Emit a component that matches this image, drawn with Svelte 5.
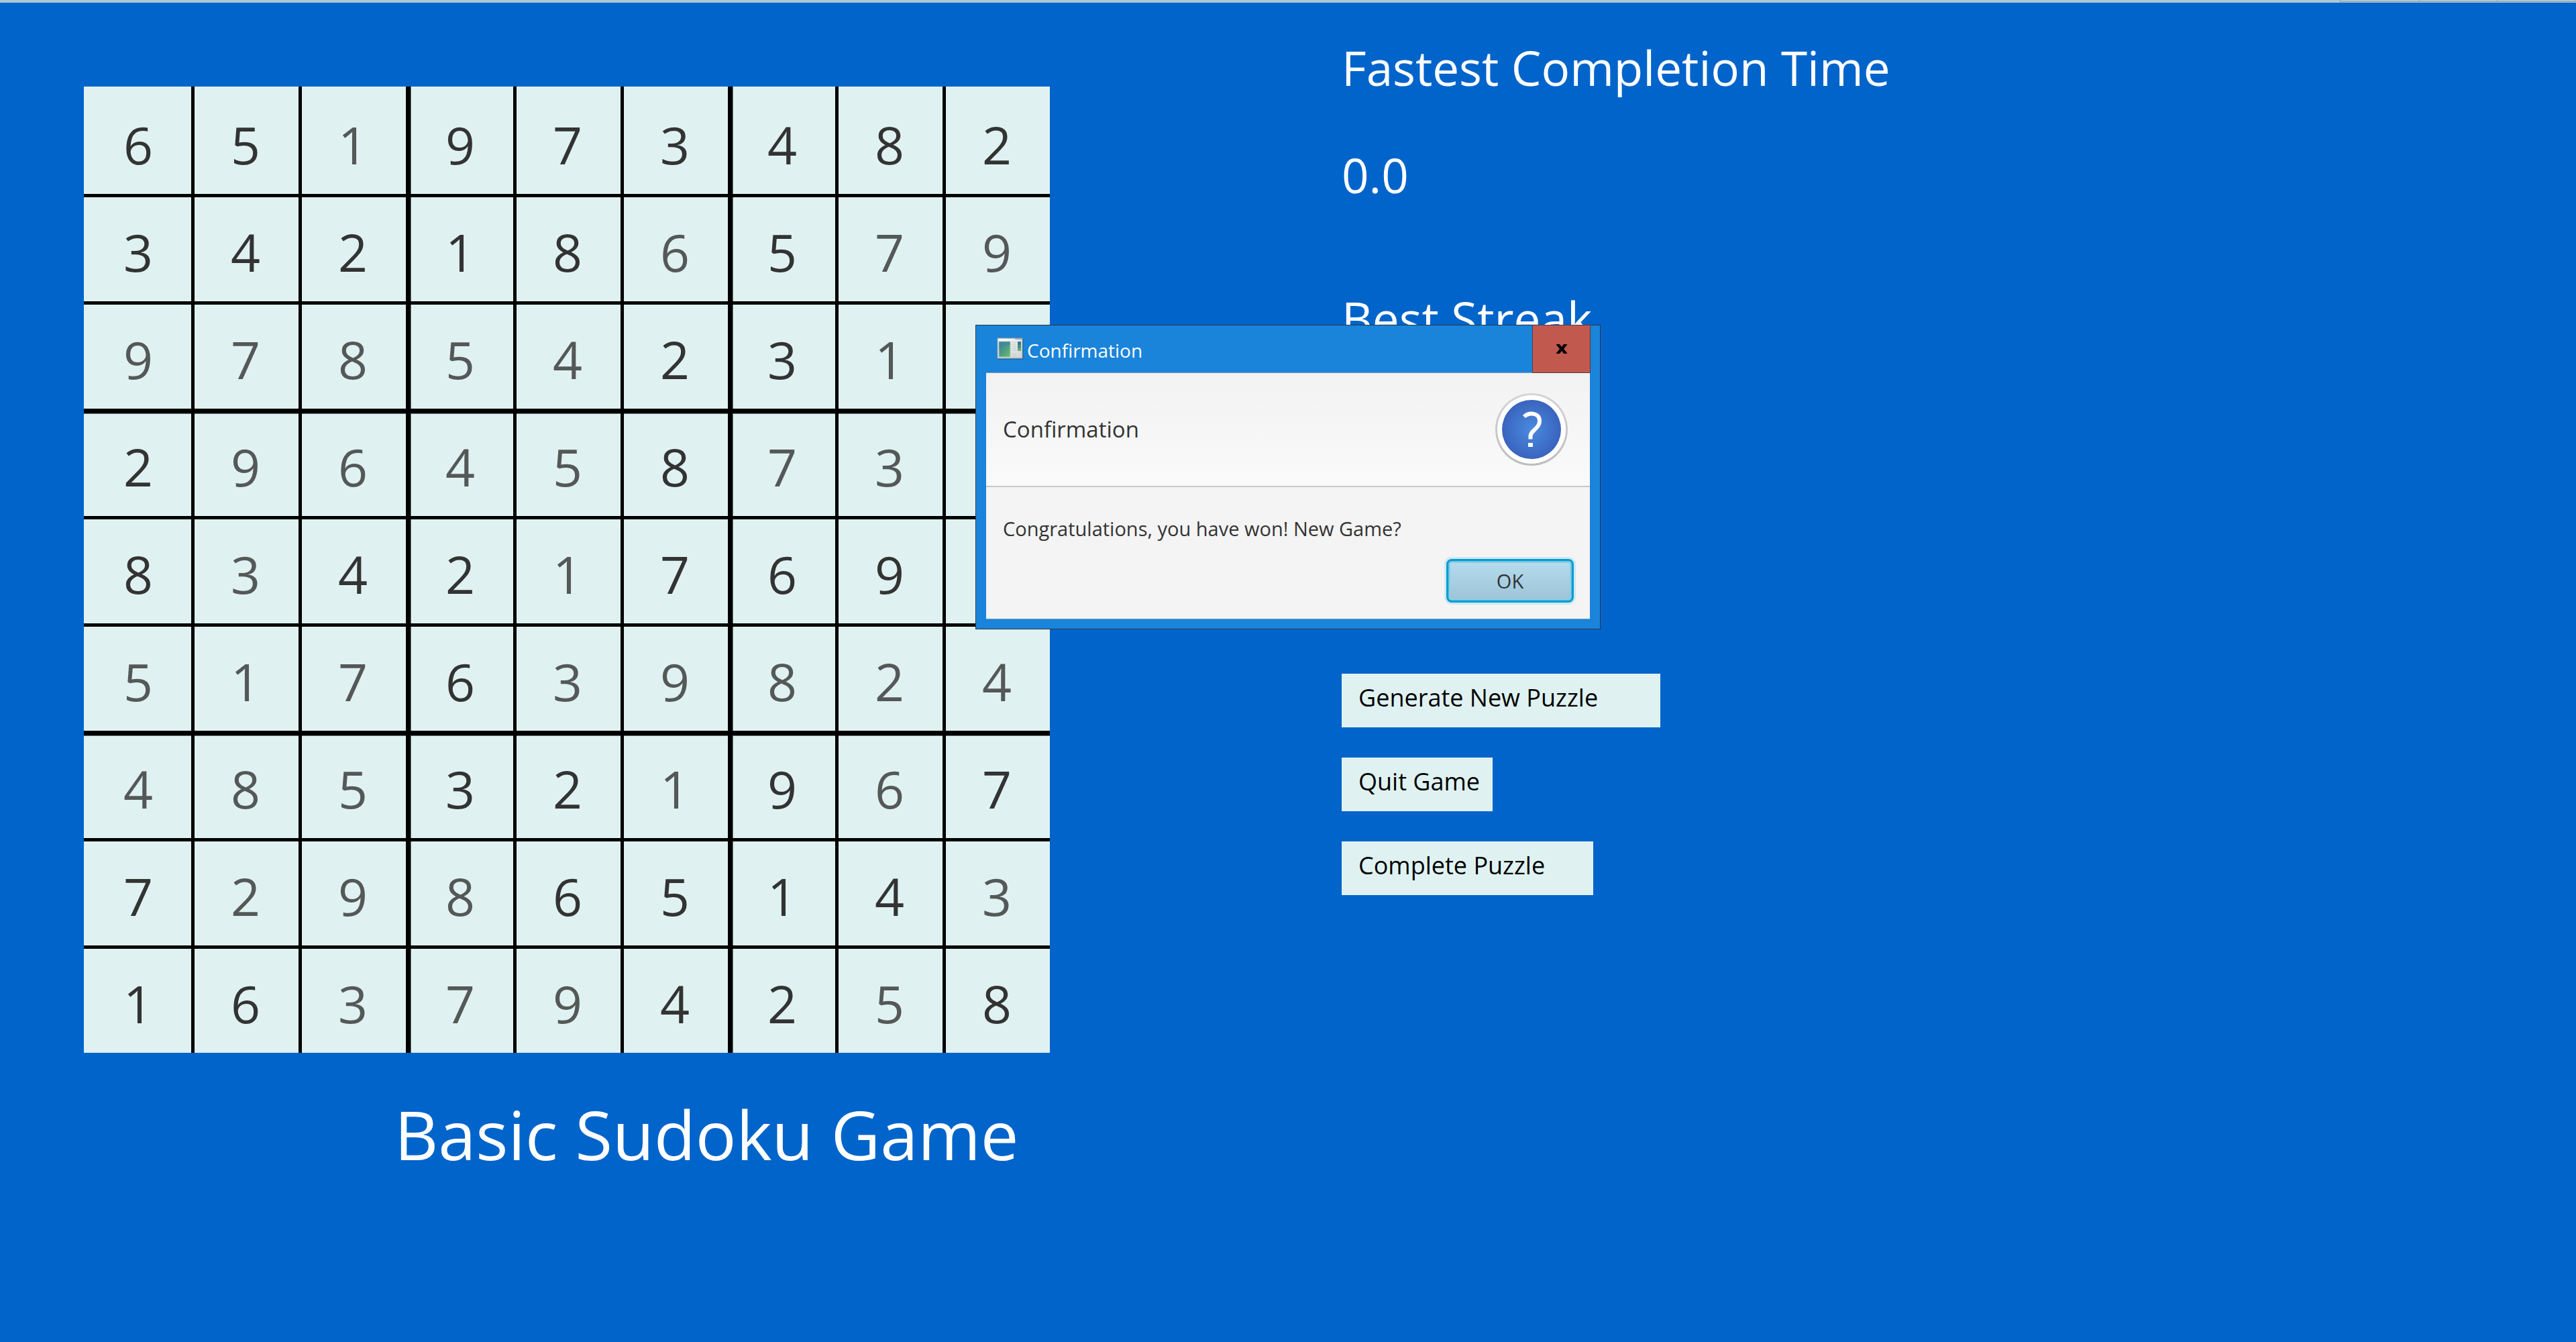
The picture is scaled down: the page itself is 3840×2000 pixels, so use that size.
<script>
  // A trailing * marks a number filled in by the player.
  const rows = [
    '6 5 1* 9 7 3 4 8 2',
    '3 4 2 1 8 6* 5 7* 9*',
    '9* 7* 8* 5* 4* 2 3 1* 6*',
    '2 9* 6* 4* 5* 8 7* 3* 1',
    '8 3* 4 2 1* 7 6 9 5*',
    '5* 1* 7* 6 3* 9* 8* 2* 4*',
    '4* 8* 5* 3 2 1* 9 6* 7',
    '7 2* 9* 8* 6 5 1 4 3*',
    '1 6 3* 7* 9* 4 2 5* 8'
  ];
  const cells = rows.flatMap((row, r) =>
    row.split(' ').map((cell, c) => ({
      row: r,
      col: c,
      value: cell[0],
      entered: cell.endsWith('*')
    }))
  );

  let open = $state(true);
</script>

<div class="page">
  <div class="strip" aria-hidden="true"><span></span><span></span><span></span></div>

  <main>
    <section class="game">
      <div class="board">
        {#each cells as cell}
          <input
            class={[
              'cell',
              cell.entered && 'entered',
              cell.row > 0 && (cell.row % 3 ? 'top-thin' : 'top-thick'),
              cell.col > 0 && (cell.col % 3 ? 'left-thin' : 'left-thick')
            ]}
            value={cell.value}
            maxlength="1"
            aria-label="Row {cell.row + 1}, column {cell.col + 1}"
          />
        {/each}
      </div>
      <h1>Basic Sudoku Game</h1>
    </section>

    <aside>
      <dl>
        <dt>Fastest Completion Time</dt>
        <dd>0.0</dd>
        <dt>Best Streak</dt>
      </dl>
      <div class="actions">
        <button class="wide" type="button">Generate New Puzzle</button>
        <button class="narrow" type="button">Quit Game</button>
        <button class="medium" type="button">Complete Puzzle</button>
      </div>
    </aside>
  </main>

  {#if open}
    <div class="dialog" role="dialog" aria-labelledby="dialog-title">
      <div class="titlebar">
        <svg class="app-icon" viewBox="0 0 40 34" aria-hidden="true">
          <defs>
            <linearGradient id="frame" x1="0" y1="0" x2="1" y2="1">
              <stop offset="0" stop-color="#ffffff" />
              <stop offset="1" stop-color="#cfd2d2" />
            </linearGradient>
            <linearGradient id="pane" x1="0" y1="0" x2="1" y2="1">
              <stop offset="0" stop-color="#3f7fa6" />
              <stop offset="0.5" stop-color="#4a9c84" />
              <stop offset="1" stop-color="#6fbf66" />
            </linearGradient>
            <linearGradient id="bar" x1="0" y1="0" x2="0" y2="1">
              <stop offset="0" stop-color="#2f6d9c" />
              <stop offset="1" stop-color="#66b573" />
            </linearGradient>
          </defs>
          <rect x="1" y="2" width="39" height="31" fill="#1f5f95" opacity="0.6" />
          <rect x="1" y="1" width="37" height="30" fill="url(#frame)" stroke="#8c979e" />
          <path d="M27 2h10" stroke="#a5abb0" stroke-width="2" />
          <rect x="3" y="6" width="17" height="23" fill="url(#pane)" stroke="#a9c9c4" />
          <path d="M3 18Q9 11 20 11V6H3z" fill="#3d7fa8" opacity="0.4" />
          <path d="M22 7h7M22 10h7M22 13h7M22 16h7M22 19h7M22 25h7M22 28h7" stroke="#c5c8ca" />
          <rect x="31" y="6" width="5" height="14" fill="url(#bar)" />
          <path d="M31 10h5M31 14h5" stroke="#2d7a80" stroke-width="0.6" />
        </svg>
        <span id="dialog-title" class="caption">Confirmation</span>
        <button class="close" type="button" aria-label="Close" onclick={() => (open = false)}>
          <svg viewBox="0 0 16 14" aria-hidden="true">
            <path d="M0 0h5l3 4 3-4h5v1l-5 6 5 6v1h-5l-3-4-3 4H0v-1l5-6-5-6z" fill="#000" />
          </svg>
        </button>
      </div>
      <div class="content">
        <header>
          <h2>Confirmation</h2>
          <svg class="question" viewBox="0 0 108 108" aria-hidden="true">
            <defs>
              <radialGradient id="disc">
                <stop offset="0" stop-color="#4a8ade" />
                <stop offset="1" stop-color="#3a64be" />
              </radialGradient>
              <linearGradient id="ring" x1="0" y1="0" x2="0" y2="1">
                <stop offset="0" stop-color="#d6d6d6" />
                <stop offset="1" stop-color="#bdbdbd" />
              </linearGradient>
            </defs>
            <circle cx="54" cy="54" r="54" fill="url(#ring)" />
            <circle cx="54" cy="54" r="51" fill="#fff" />
            <circle cx="54" cy="54" r="44" fill="url(#disc)" />
            <path
              d="M43 35C46 32 49 30.500 54 30.500C61 30.500 66 34.500 66 41C66 47 63 50 59 54C55 58 52.500 60 52.500 64V68.500"
              fill="none"
              stroke="#fff"
              stroke-width="6"
            />
            <rect x="49" y="74" width="7" height="6" fill="#fff" />
          </svg>
        </header>
        <div class="body">
          <p>Congratulations, you have won! New Game?</p>
          <button class="ok" type="button" onclick={() => (open = false)}>OK</button>
        </div>
      </div>
    </div>
  {/if}
</div>

<style>
  :global(body) {
    margin: 0;
    background: #0064cb;
  }

  .page {
    position: relative;
    min-height: 100vh;
    overflow: hidden;
    background: #0064cb;
    color: #fff;
    font-family: 'Segoe UI', 'Open Sans', 'Noto Sans', sans-serif;
  }

  button,
  input {
    margin: 0;
    border: 0;
    border-radius: 0;
    outline: 0;
    font-family: inherit;
    box-sizing: border-box;
  }

  .strip {
    display: flex;
    justify-content: flex-end;
    height: 4px;
    padding-right: 1px;
    box-sizing: border-box;
    background: #adc6d8;
  }

  .strip span {
    width: 115px;
    height: 2px;
    border-right: 1px solid #869eae;
    border-bottom: 1px solid #869eae;
  }

  .strip span:first-child {
    width: 117px;
    border-left: 1px solid #869eae;
  }

  main {
    display: grid;
    grid-template-columns: 1440px minmax(0, 1fr);
    column-gap: 435px;
    padding-left: 125px;
  }

  .game {
    padding-top: 125px;
  }

  .board {
    display: grid;
    grid-template-columns: repeat(9, 1fr);
    grid-auto-rows: 160px;
  }

  .cell {
    --top: 0 0 #000;
    --left: 0 0 #000;
    --top-edge: 0 0 #000;
    --left-edge: 0 0 #000;
    width: 100%;
    height: 100%;
    padding: 12px 0 0 2px;
    background: #dff2f1;
    box-shadow:
      inset var(--top),
      inset var(--left),
      inset var(--top-edge),
      inset var(--left-edge);
    color: #333;
    font-size: 77px;
    text-align: center;
  }

  .entered {
    color: #555858;
  }

  .top-thin {
    --top: 0 5px #000;
  }

  .top-thick {
    --top: 0 7px #000;
    --top-edge: 0 8px #6f7978;
  }

  .left-thin {
    --left: 5px 0 #000;
  }

  .left-thick {
    --left: 7px 0 #000;
    --left-edge: 8px 0 #6f7978;
  }

  h1 {
    margin: 51px 0 0 463px;
    font-size: 101px;
    font-weight: 400;
    line-height: 140px;
    white-space: nowrap;
  }

  dl {
    margin: 0;
    padding-top: 47px;
  }

  dt,
  dd {
    margin: 0;
    font-size: 71px;
    line-height: 100px;
  }

  dd {
    padding: 60px 0 114px;
  }

  .actions {
    display: flex;
    flex-direction: column;
    align-items: flex-start;
    gap: 45px;
    padding-top: 479px;
  }

  .actions button {
    height: 80px;
    padding: 0 0 8px 25px;
    background: #dff2f1;
    color: #000;
    font-size: 36px;
    line-height: 72px;
    text-align: left;
    white-space: nowrap;
  }

  .wide {
    width: 475px;
  }

  .medium {
    width: 375px;
  }

  .narrow {
    width: 225px;
  }

  .dialog {
    position: absolute;
    top: 484px;
    left: 1454px;
    width: 932px;
    box-sizing: border-box;
    padding: 0 15px 14px;
    border: 1px solid #26384a;
    background: #1a84da;
    color: #333;
  }

  .titlebar {
    display: flex;
    align-items: center;
    height: 70px;
    padding-left: 16px;
    color: #fff;
  }

  .app-icon {
    width: 40px;
    height: 34px;
  }

  .caption {
    flex: 1;
    padding: 4px 0 0 5px;
    font-size: 28px;
    line-height: 40px;
  }

  .close {
    display: grid;
    place-items: center;
    align-self: flex-start;
    z-index: 1;
    width: 87px;
    height: 72px;
    margin: -1px -1px 0 0;
    padding: 0;
    border: 1px solid #5a3a40;
    background: #c1594f;
  }

  .close svg {
    width: 16px;
    height: 14px;
  }

  .content {
    border-top: 1px solid #6c9cc6;
    border-bottom: 1px solid #6c9cc6;
    background: #f4f4f4;
  }

  header {
    display: flex;
    align-items: center;
    justify-content: space-between;
    height: 170px;
    padding: 0 33px 0 25px;
    border-bottom: 2px solid #c8c8c8;
    box-sizing: border-box;
    background: linear-gradient(#f2f2f2, #fafafa);
  }

  h2 {
    margin: 0;
    font-size: 33px;
    font-weight: 400;
    line-height: 48px;
  }

  .question {
    width: 108px;
    height: 108px;
  }

  .body {
    display: flex;
    flex-direction: column;
    padding: 40px 24px 24px 25px;
  }

  p {
    margin: 0;
    font-size: 29px;
    line-height: 44px;
  }

  .ok {
    align-self: flex-end;
    width: 190px;
    height: 65px;
    margin-top: 23px;
    padding: 0;
    border: 3px solid #039ed3;
    border-radius: 8px;
    background: linear-gradient(#b4dcee, #9dc4d7);
    box-shadow:
      0 0 0 3px #d0e8f1,
      inset 0 0 0 1px #5fbfe0,
      inset 0 0 0 3px #8fcbe2;
    color: #333;
    font-size: 29px;
  }
</style>
